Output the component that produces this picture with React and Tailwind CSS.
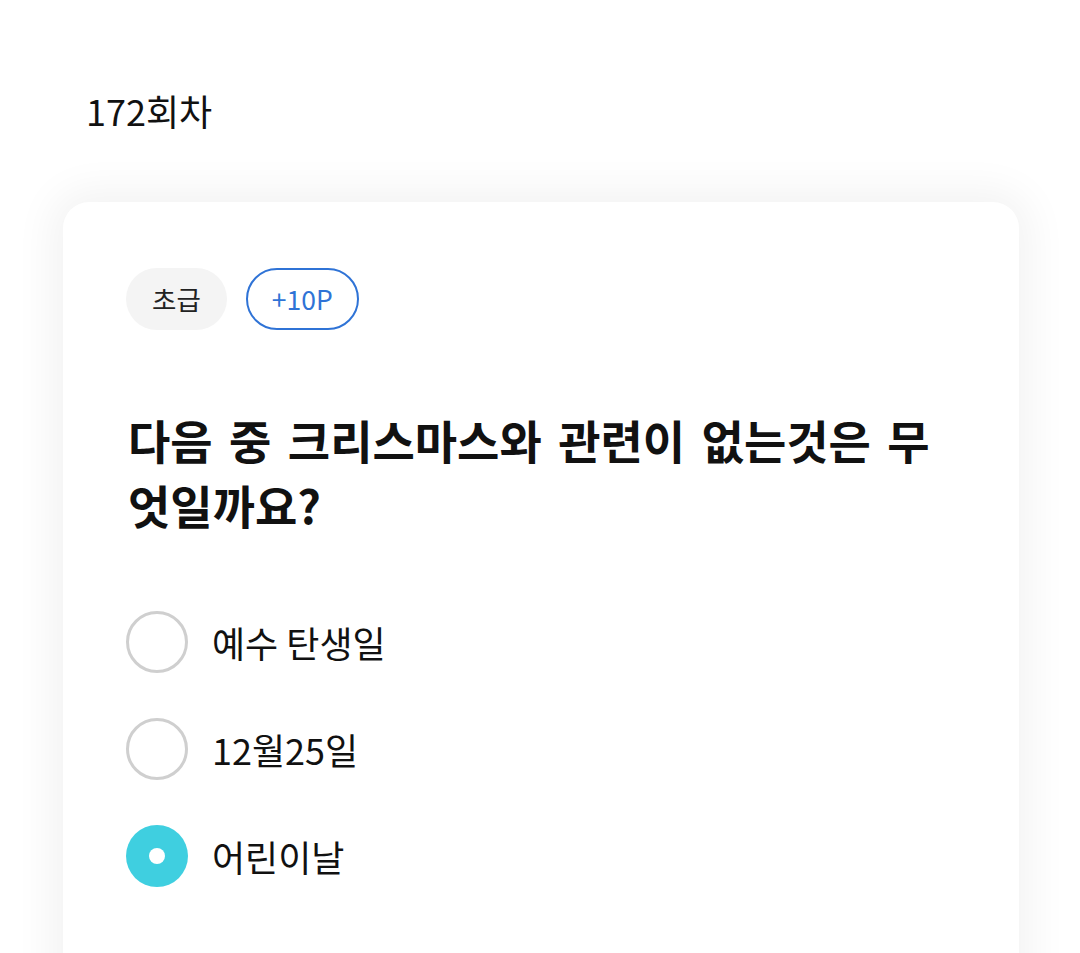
import { useState } from 'react';

const options = ['예수 탄생일', '12월25일', '어린이날'];

export default function App() {
  const [selected, setSelected] = useState(2);

  return (
    <div className="h-[953px] bg-white overflow-hidden" style={{ fontFamily: '"Noto Sans CJK KR", "Noto Sans", sans-serif' }}>
      {/* Round header */}
      <div className="pl-[86px] pt-[85px] text-[36px] leading-[50px] text-[#111]">172회차</div>

      {/* Quiz card */}
      <div className="ml-[63px] mr-[61px] mt-[67px] rounded-[26px] bg-white pl-[63px] pr-[62px] pt-[66px] pb-[120px] shadow-[0_0_40px_12px_rgba(0,0,0,0.05)]">
        <div className="flex gap-[19px]">
          <span className="h-[62px] px-[26px] rounded-full bg-[#f4f4f4] flex items-center text-[26.5px] text-[#222]">초급</span>
          <span className="h-[62px] px-[24px] rounded-full border-2 border-[#2f73d6] flex items-center text-[26.5px] text-[#2f73d6]">+10P</span>
        </div>

        <h2 className="mt-[77px] pl-[2px] text-[46px] leading-[65px] font-bold text-[#111] [word-spacing:6px]">
          다음 중 크리스마스와 관련이 없는것은 무엇일까요?
        </h2>

        <div className="mt-[74px] flex flex-col gap-[45px]">
          {options.map((opt, i) => (
            <button key={opt} onClick={() => setSelected(i)} className="flex items-center gap-[24px] text-left">
              {selected === i ? (
                <span className="w-[62px] h-[62px] rounded-full bg-[#3fcfe0] flex items-center justify-center">
                  <span className="w-[16px] h-[16px] rounded-full bg-white" />
                </span>
              ) : (
                <span className="w-[62px] h-[62px] rounded-full border-[3px] border-[#cfcfcf] bg-white" />
              )}
              <span className="text-[36px] leading-[50px] text-[#111]">{opt}</span>
            </button>
          ))}
        </div>
      </div>
    </div>
  );
}
